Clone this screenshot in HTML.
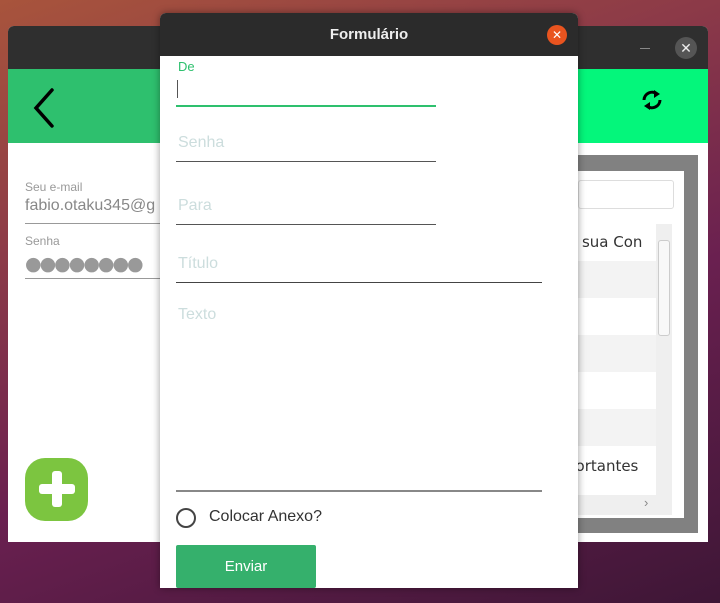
<!DOCTYPE html><html><head><style>
*{margin:0;padding:0;box-sizing:border-box}
body{width:720px;height:603px;overflow:hidden;position:relative;font-family:"Liberation Sans","DejaVu Sans",sans-serif;background:linear-gradient(160deg,#a8543c 0%,#8c3a48 30%,#6a2050 60%,#3e1636 100%)}
.a{position:absolute}
</style></head><body>
<!-- back window -->
<div class="a" style="left:8px;top:26px;width:700px;height:516px;background:#fff;border-radius:6px 6px 0 0;overflow:hidden">
 <div class="a" style="left:0;top:0;width:700px;height:43px;background:#2f2f2f"></div>
 <div class="a" style="left:632px;top:22px;width:10px;height:1px;background:#888"></div>
 <div class="a" style="left:667px;top:11px;width:22px;height:22px;border-radius:50%;background:#555;color:#eee;font-size:14px;text-align:center;line-height:22px;font-weight:bold">✕</div>
 <div class="a" style="left:0;top:43px;width:700px;height:74px;background:#2ec06e"></div>
 <div class="a" style="left:570px;top:43px;width:130px;height:74px;background:#04f67b"></div>
 <svg class="a" style="left:22px;top:60px" width="30" height="44"><path d="M22 4 L6 22 L22 40" stroke="#000" stroke-width="3.5" fill="none" stroke-linecap="round"/></svg>
 <svg class="a" style="left:630px;top:60px" width="28" height="28" viewBox="0 0 28 28"><path d="M6 14 A8 8 0 0 1 19 8" stroke="#000" stroke-width="3" fill="none"/><path d="M16 4 L22 8 L16 12Z" fill="#000"/><path d="M22 14 A8 8 0 0 1 9 20" stroke="#000" stroke-width="3" fill="none"/><path d="M12 16 L6 20 L12 24Z" fill="#000"/></svg>
 <div class="a" style="left:17px;top:154px;font-size:12px;color:#999">Seu e-mail</div>
 <div class="a" style="left:17px;top:171px;font-size:16px;color:#888">fabio.otaku345@g</div>
 <div class="a" style="left:17px;top:197px;width:140px;height:1px;background:#999"></div>
 <div class="a" style="left:17px;top:208px;font-size:12px;color:#999">Senha</div>
 <div class="a" style="left:17px;top:227px;font-size:19px;color:#999;letter-spacing:-2px;font-family:'DejaVu Sans',sans-serif">●●●●●●●●</div>
 <div class="a" style="left:17px;top:252px;width:140px;height:1px;background:#999"></div>
 <div class="a" style="left:17px;top:432px;width:63px;height:63px;border-radius:20px;background:#7cc540"></div>
 <div class="a" style="left:31px;top:458px;width:36px;height:10px;background:#fff;border-radius:3px"></div>
 <div class="a" style="left:44px;top:445px;width:10px;height:36px;background:#fff;border-radius:3px"></div>
 <div class="a" style="left:570px;top:129px;width:120px;height:378px;background:#818181"></div>
 <div class="a" style="left:570px;top:145px;width:106px;height:347px;background:#fff"></div>
 <div class="a" style="left:570px;top:154px;width:96px;height:29px;border:1px solid #ddd;border-radius:3px"></div>
 <div class="a" style="left:570px;top:235px;width:78px;height:37px;background:#f3f3f3"></div>
 <div class="a" style="left:570px;top:309px;width:78px;height:37px;background:#f3f3f3"></div>
 <div class="a" style="left:570px;top:383px;width:78px;height:37px;background:#f3f3f3"></div>
 <div class="a" style="left:560px;top:207px;font-size:15px;color:#333;font-family:'DejaVu Sans',sans-serif">a sua Con</div>
 <div class="a" style="left:558px;top:431px;font-size:15px;color:#333;font-family:'DejaVu Sans',sans-serif">portantes</div>
 <div class="a" style="left:648px;top:198px;width:16px;height:271px;background:#efefef"></div>
 <div class="a" style="left:650px;top:214px;width:12px;height:96px;background:#f8f8f8;border:1px solid #ccc;border-radius:3px"></div>
 <div class="a" style="left:570px;top:469px;width:94px;height:20px;background:#efefef"></div>
 <div class="a" style="left:636px;top:469px;font-size:13px;color:#888">›</div>
</div>
<!-- dialog -->
<div class="a" style="left:160px;top:13px;width:418px;height:575px;background:#fff;border-radius:6px 6px 0 0;overflow:hidden;box-shadow:0 0 8px rgba(0,0,0,.4)">
 <div class="a" style="left:0;top:0;width:418px;height:43px;background:#2b2b2b;color:#eee;font-weight:bold;font-size:15px;text-align:center;line-height:44px">Formulário</div>
 <div class="a" style="left:387px;top:12px;width:20px;height:20px;border-radius:50%;background:#e9541f;color:#fff;font-size:12px;font-weight:bold;text-align:center;line-height:20px">✕</div>
 <div class="a" style="left:18px;top:46px;font-size:13px;color:#2ec06e">De</div>
 <div class="a" style="left:17px;top:67px;width:1px;height:18px;background:#555"></div>
 <div class="a" style="left:16px;top:92px;width:260px;height:2px;background:#2ec06e"></div>
 <div class="a" style="left:18px;top:121px;font-size:16px;color:#cdd">Senha</div>
 <div class="a" style="left:16px;top:148px;width:260px;height:1px;background:#555"></div>
 <div class="a" style="left:18px;top:184px;font-size:16px;color:#cdd">Para</div>
 <div class="a" style="left:16px;top:211px;width:260px;height:1px;background:#555"></div>
 <div class="a" style="left:18px;top:242px;font-size:16px;color:#cdd">Título</div>
 <div class="a" style="left:16px;top:269px;width:366px;height:1px;background:#444"></div>
 <div class="a" style="left:18px;top:293px;font-size:16px;color:#cdd">Texto</div>
 <div class="a" style="left:16px;top:477px;width:366px;height:2px;background:#888"></div>
 <div class="a" style="left:16px;top:495px;width:20px;height:20px;border-radius:50%;border:2px solid #444"></div>
 <div class="a" style="left:49px;top:495px;font-size:16px;color:#333">Colocar Anexo?</div>
 <div class="a" style="left:16px;top:532px;width:140px;height:43px;background:#35b06c;border-radius:2px;color:#fff;font-size:15px;text-align:center;line-height:43px">Enviar</div>
</div>
</body></html>
